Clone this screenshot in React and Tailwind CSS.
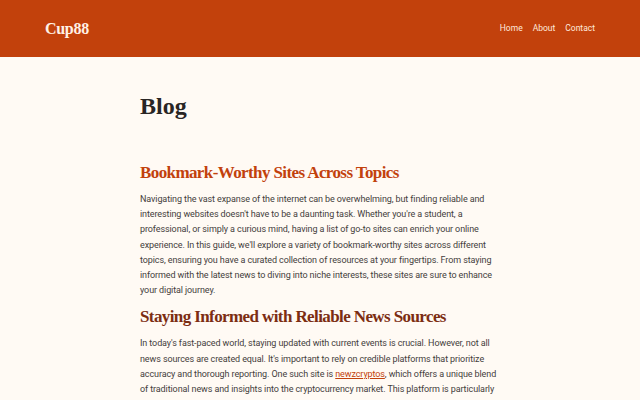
export default function App() {
    const serif = { fontFamily: '"Liberation Serif", "Times New Roman", serif' }

    return (
        <div className="min-h-screen bg-[#fffaf4]" style={{ fontFamily: '"Roboto", "Liberation Sans", sans-serif' }}>
            {/* Header */}
            <header className="bg-[#c2410c] h-[57px]">
                <div className="max-w-[550px] mx-auto h-full flex items-center justify-between">
                    <a href="#" className="text-[#fff1e6] font-bold text-[16px] tracking-[-0.3px]" style={serif}>Cup88</a>
                    <nav className="flex items-center gap-[10px] text-[8.5px] text-[#ffe9dc]">
                        <a href="#">Home</a>
                        <a href="#">About</a>
                        <a href="#">Contact</a>
                    </nav>
                </div>
            </header>

            {/* Main */}
            <main className="max-w-[360px] mx-auto pt-[34px]">
                <h1 className="text-[24px] font-bold text-[#292524] leading-[30px]" style={serif}>Blog</h1>

                <article className="mt-[41px]">
                    <h2 className="text-[17px] tracking-[-0.6px] font-bold text-[#c2410c] leading-[22px]" style={serif}>Bookmark-Worthy Sites Across Topics</h2>
                    <p className="mt-[8px] text-[9px] tracking-[-0.1px] leading-[15.2px] text-[#44403c]">
                        Navigating the vast expanse of the internet can be overwhelming, but finding reliable and interesting websites doesn't have to be a daunting task. Whether you're a student, a professional, or simply a curious mind, having a list of go-to sites can enrich your online experience. In this guide, we'll explore a variety of bookmark-worthy sites across different topics, ensuring you have a curated collection of resources at your fingertips. From staying informed with the latest news to diving into niche interests, these sites are sure to enhance your digital journey.
                    </p>

                    <h3 className="mt-[8px] text-[17px] tracking-[-0.6px] font-bold text-[#7c2d12] leading-[22px]" style={serif}>Staying Informed with Reliable News Sources</h3>
                    <p className="mt-[8px] text-[9px] tracking-[-0.1px] leading-[15.2px] text-[#44403c]">
                        In today's fast-paced world, staying updated with current events is crucial. However, not all news sources are created equal. It's important to rely on credible platforms that prioritize accuracy and thorough reporting. One such site is <a href="#" className="text-[#c2410c] underline">newzcryptos</a>, which offers a unique blend of traditional news and insights into the cryptocurrency market. This platform is particularly useful for those who want to stay ahead in both finance and technology.
                    </p>
                </article>
            </main>
        </div>
    )
}
